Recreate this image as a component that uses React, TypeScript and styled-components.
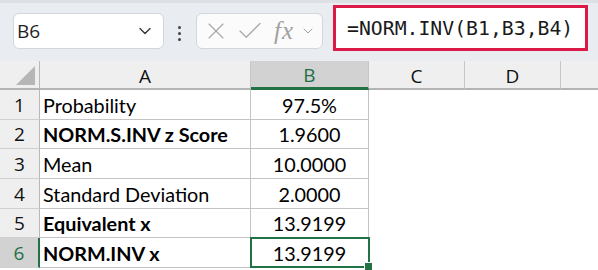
import React from 'react';
import styled, { createGlobalStyle } from 'styled-components';
import { ChevronDown, X, Check } from 'lucide-react';

const GlobalStyle = createGlobalStyle`
  html, body {
    margin: 0;
    padding: 0;
    background: #ffffff;
    overflow: hidden;
  }
  body {
    font-family: Lato, "Open Sans", sans-serif;
  }
`;

const Page = styled.div`
  width: 598px;
  height: 270px;
  overflow: hidden;
  display: flex;
  flex-direction: column;
`;

const Toolbar = styled.div`
  height: 58px;
  background: #e9ecf0;
  border-top: 3px solid #dde1e6;
  display: flex;
  align-items: flex-start;
  padding-left: 13px;
  box-sizing: content-box;
`;

const NameBox = styled.div`
  margin-top: 10px;
  width: 151px;
  height: 36px;
  box-sizing: border-box;
  background: #ffffff;
  border: 1px solid #d3d6da;
  border-radius: 6px;
  display: flex;
  align-items: center;
  justify-content: space-between;
  padding: 0 8px 0 3px;
  font-family: "Open Sans", sans-serif;
  font-size: 19px;
  color: #1f1f1f;
`;

const Dots = styled.div`
  margin: 23px 0 0 14px;
  width: 4px;
  display: flex;
  flex-direction: column;
  gap: 3px;
`;

const Dot = styled.span`
  width: 3px;
  height: 3px;
  border-radius: 50%;
  background: #444;
`;

const FuncBox = styled.div`
  margin: 10px 0 0 14px;
  width: 127px;
  height: 36px;
  box-sizing: border-box;
  background: #fbfbfb;
  border: 1px solid #d3d6da;
  border-radius: 6px;
  display: flex;
  align-items: center;
  padding-left: 5px;
  gap: 5px;
  color: #a8a8a8;
`;

const Fx = styled.span`
  font-family: "Liberation Serif", serif;
  font-style: italic;
  font-size: 25px;
  color: #a0a0a0;
  margin-left: 4px;
  margin-right: 1px;
  letter-spacing: 1px;
`;

const FormulaBox = styled.div`
  margin: 2px 0 0 10px;
  width: 255px;
  height: 46px;
  box-sizing: border-box;
  background: #ffffff;
  border: 3px solid #dc1a48;
  display: flex;
  align-items: center;
  padding-left: 11px;
  font-family: "DejaVu Sans Mono", monospace;
  font-size: 19.8px;
  color: #1a1a1a;
`;

const Sheet = styled.div`
  display: grid;
  grid-template-columns: 40px 211px 118px 96px 96px 1fr;
  grid-template-rows: 29px 30px 29px 30px 30px 29px 30px;
`;

const Corner = styled.div`
  background: #efefef;
  border-right: 1px solid #b8b8b8;
  border-bottom: 2px solid #b4b4b4;
  box-sizing: border-box;
  position: relative;
`;

const CornerTriangle = styled.div`
  position: absolute;
  right: 4px;
  bottom: 3px;
  width: 0;
  height: 0;
  border-left: 19px solid transparent;
  border-bottom: 19px solid #b6b6b6;
`;

const ColHead = styled.div<{ $active?: boolean; $last?: boolean }>`
  background: ${(p) => (p.$active ? '#d2d2d2' : '#efefef')};
  color: ${(p) => (p.$active ? '#1e7145' : '#111')};
  border-right: ${(p) => (p.$last ? 'none' : '1px solid #c6c6c6')};
  border-bottom: ${(p) => (p.$active ? '3px solid #217346' : '2px solid #b4b4b4')};
  box-sizing: border-box;
  display: flex;
  align-items: center;
  justify-content: center;
  font-family: "Open Sans", sans-serif;
  font-size: 19px;
  padding-top: 2px;
`;

const RowHead = styled.div<{ $active?: boolean }>`
  background: ${(p) => (p.$active ? '#d2d2d2' : '#efefef')};
  color: ${(p) => (p.$active ? '#1e7145' : '#111')};
  border-right: ${(p) => (p.$active ? '2px solid #217346' : '1px solid #b8b8b8')};
  border-bottom: 1px solid #d0d0d0;
  box-sizing: border-box;
  display: flex;
  align-items: center;
  justify-content: center;
  font-family: "Open Sans", sans-serif;
  font-size: 19px;
`;

const Cell = styled.div<{ $bold?: boolean; $center?: boolean }>`
  border-right: 1px solid #c3c3c3;
  border-bottom: 1px solid #c3c3c3;
  box-sizing: border-box;
  display: flex;
  align-items: center;
  justify-content: ${(p) => (p.$center ? 'center' : 'flex-start')};
  padding-left: ${(p) => (p.$center ? '0' : '3px')};
  font-family: Lato, sans-serif;
  font-weight: ${(p) => (p.$bold ? 700 : 400)};
  font-size: 19.8px;
  color: #000;
  position: relative;
`;

const Blank = styled.div``;

const Selection = styled.div`
  position: absolute;
  left: -1px;
  top: -1px;
  right: -2px;
  bottom: -1px;
  border: 2px solid #217346;
  pointer-events: none;
`;

const Handle = styled.div`
  position: absolute;
  right: -5px;
  bottom: -5px;
  width: 7px;
  height: 7px;
  background: #217346;
  border: 1px solid #fff;
`;

const rows = [
  { label: 'Probability', value: '97.5%', bold: false },
  { label: 'NORM.S.INV z Score', value: '1.9600', bold: true },
  { label: 'Mean', value: '10.0000', bold: false },
  { label: 'Standard Deviation', value: '2.0000', bold: false },
  { label: 'Equivalent x', value: '13.9199', bold: true },
  { label: 'NORM.INV x', value: '13.9199', bold: true },
];

const App: React.FC = () => {
  return (
    <Page>
      <GlobalStyle />
      <Toolbar>
        <NameBox>
          <span>B6</span>
          <ChevronDown size={20} strokeWidth={1.6} color="#333" />
        </NameBox>
        <Dots>
          <Dot />
          <Dot />
          <Dot />
        </Dots>
        <FuncBox>
          <X size={28} strokeWidth={1} />
          <Check size={30} strokeWidth={1} />
          <Fx>fx</Fx>
          <ChevronDown size={16} strokeWidth={1.4} color="#9a9a9a" />
        </FuncBox>
        <FormulaBox>=NORM.INV(B1,B3,B4)</FormulaBox>
      </Toolbar>
      <Sheet>
        <Corner>
          <CornerTriangle />
        </Corner>
        <ColHead>A</ColHead>
        <ColHead $active>B</ColHead>
        <ColHead>C</ColHead>
        <ColHead>D</ColHead>
        <ColHead $last />
        {rows.map((r, i) => {
          const selected = i === rows.length - 1;
          return (
            <React.Fragment key={i}>
              <RowHead $active={selected}>{i + 1}</RowHead>
              <Cell $bold={r.bold}>{r.label}</Cell>
              <Cell $center>
                {r.value}
                {selected && (
                  <Selection>
                    <Handle />
                  </Selection>
                )}
              </Cell>
              <Blank />
              <Blank />
              <Blank />
            </React.Fragment>
          );
        })}
      </Sheet>
    </Page>
  );
};

export default App;
